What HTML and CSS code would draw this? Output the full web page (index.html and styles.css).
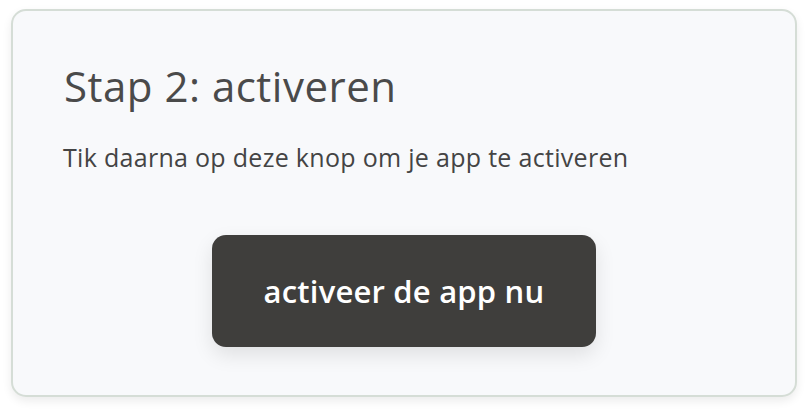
FILE: index.html
```html
<!DOCTYPE html>
<html lang="nl">
<head>
  <meta charset="UTF-8">
  <meta name="viewport" content="width=device-width, initial-scale=1.0">
  <title>Stap 2: activeren</title>
  <link rel="stylesheet" href="styles.css">
</head>
<body>

<div class="step-card">
  <h2 class="step-title">Stap 2: activeren</h2>
  <p class="step-text">Tik daarna op deze knop om je app te activeren</p>
  <div class="step-actions">
    <a class="activate-btn" href="#">activeer de app nu</a>
  </div>
</div>

</body>
</html>
```

FILE: styles.css
```css
body {
  font-family: "Open Sans", sans-serif;
  margin: 0;
  background: #ffffff;
  padding: 9px 15px 18px 11px;
}

.step-card {
  background: #f8f9fb;
  border: 2px solid #d5ddd6;
  border-radius: 15px;
  box-shadow: 0 4px 10px rgba(0, 0, 0, 0.08);
  padding: 50px 50px 0 50px;
  height: 388px;
  box-sizing: border-box;
}

.step-title {
  margin: 0 0 0 1px;
  font-size: 42px;
  font-weight: 400;
  color: #4a4a4a;
  line-height: 50px;
  letter-spacing: 0.5px;
}

.step-text {
  margin: 29px 0 0 0;
  font-size: 25px;
  color: #444444;
  line-height: 34px;
  letter-spacing: 0.3px;
}

.step-actions {
  display: flex;
  justify-content: center;
  margin-top: 61px;
}

.activate-btn {
  display: flex;
  align-items: center;
  justify-content: center;
  width: 384px;
  height: 112px;
  background: #3f3e3c;
  color: #ffffff;
  text-decoration: none;
  font-size: 31px;
  font-weight: 600;
  letter-spacing: 0.2px;
  border-radius: 14px;
  box-shadow: 0 8px 20px rgba(0, 0, 0, 0.1);
}
```
